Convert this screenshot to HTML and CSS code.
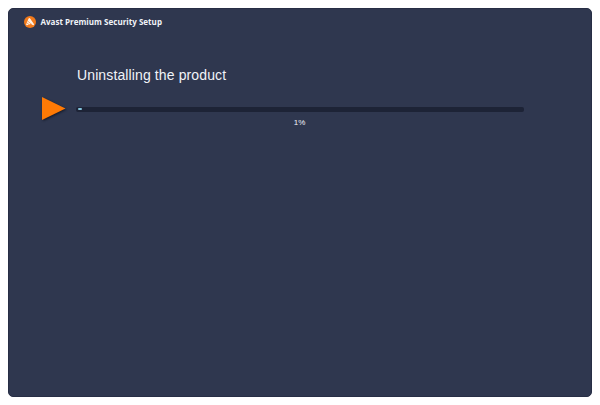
FILE: index.html
```html
<!DOCTYPE html>
<html lang="en">
<head>
<meta charset="utf-8">
<title>Avast Premium Security Setup</title>
<link rel="stylesheet" href="styles.css">
</head>
<body>
<main class="window">
  <header class="titlebar">
    <svg class="logo" viewBox="0 0 12 12" aria-hidden="true">
      <circle cx="6" cy="6" r="6" fill="#f27a1b"/>
      <path d="M4.6 2.5Q5.3 1.7 6.1 2.5L9.9 8Q10.3 9.3 9.2 9.2L6.6 8.1L3.1 9.2Q1.9 9.4 2.2 8.2Z" fill="#fff3e8"/>
      <path d="M3.8 5.2L8.2 8.8M3 7L5.2 8.7" stroke="#f27a1b" stroke-width=".6"/>
    </svg>
    <span class="title">Avast Premium Security Setup</span>
  </header>
  <section class="content">
    <h1 class="heading">Uninstalling the product</h1>
    <div class="progress-row">
      <svg class="arrow" viewBox="0 0 28 28" aria-hidden="true"><path d="M2 2L25.5 13.5L2 25Z" fill="#ff7a05"/></svg>
      <div class="track"><div class="fill"></div></div>
    </div>
    <div class="percent">1%</div>
  </section>
</main>
</body>
</html>
```
FILE: styles.css
```css
* { box-sizing: border-box; }
body {
  margin: 0;
  padding: 8px 8px 8px 8px;
  height: 405px;
  background: #fff;
  font-family: "Liberation Sans", Arial, sans-serif;
  color: #f1f3f8;
}
.window {
  height: 389px;
  background: #2f374f;
  border: 1px solid #272e45;
  border-radius: 5px;
}
.titlebar {
  display: flex;
  align-items: center;
  gap: 4.5px;
  height: 26px;
  padding-left: 15px;
}
.logo { width: 12px; height: 12px; }
.title {
  font: bold 8px/12px "Open Sans", sans-serif;
  letter-spacing: 0.02px;
  white-space: nowrap;
}
.content { padding: 31px 67px 0 68px; }
.heading {
  margin: 0;
  font-size: 14px;
  font-weight: 400;
  line-height: 18px;
  letter-spacing: 0.12px;
}
.progress-row {
  display: flex;
  align-items: center;
  height: 28px;
  margin: 11px 0 0 -37px;
}
.arrow {
  width: 28px;
  height: 28px;
  margin-right: 8px;
  filter: drop-shadow(1px 1px 1px #151a2a);
}
.track {
  flex: 1;
  height: 5px;
  padding: 1px 2px;
  background: #1d2336;
  border-radius: 2px;
}
.fill {
  width: 1%;
  min-width: 4px;
  height: 2px;
  background: #83c5dc;
  border-radius: 1px;
}
.percent {
  margin: -5px 2px 0 0;
  font-size: 8px;
  line-height: 10px;
  text-align: center;
}
```
